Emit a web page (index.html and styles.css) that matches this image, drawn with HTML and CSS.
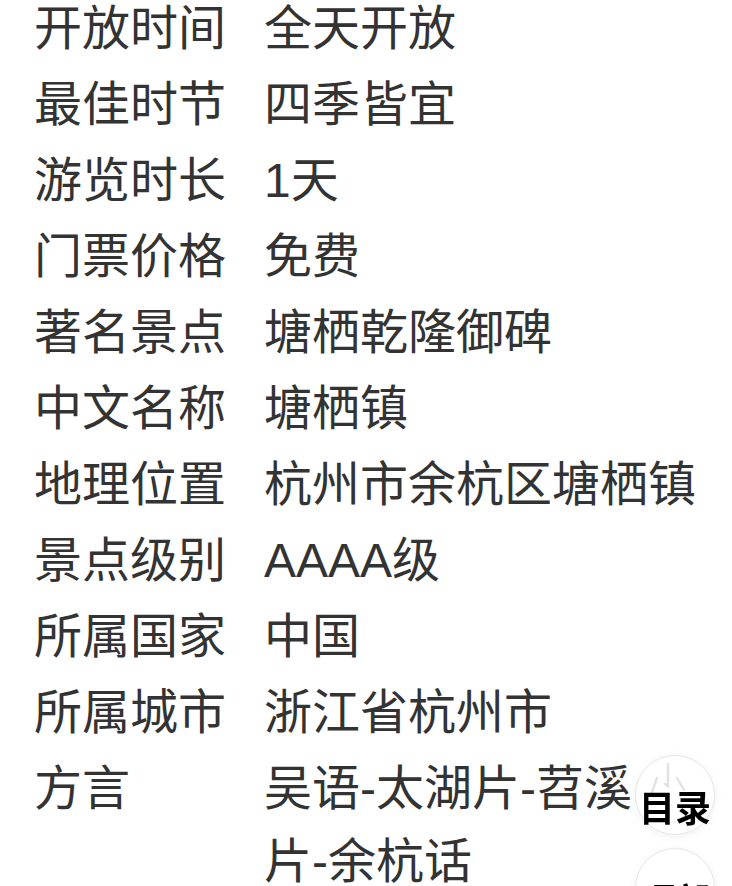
FILE: index.html
```html
<!DOCTYPE html>
<html lang="zh-CN">
<head>
<meta charset="utf-8">
<title>塘栖镇</title>
<link rel="stylesheet" href="styles.css">
</head>
<body>
<dl class="info">
  <div class="row"><dt>开放时间</dt><dd>全天开放</dd></div>
  <div class="row"><dt>最佳时节</dt><dd>四季皆宜</dd></div>
  <div class="row"><dt>游览时长</dt><dd>1天</dd></div>
  <div class="row"><dt>门票价格</dt><dd>免费</dd></div>
  <div class="row"><dt>著名景点</dt><dd>塘栖乾隆御碑</dd></div>
  <div class="row"><dt>中文名称</dt><dd>塘栖镇</dd></div>
  <div class="row"><dt>地理位置</dt><dd>杭州市余杭区塘栖镇</dd></div>
  <div class="row"><dt>景点级别</dt><dd>AAAA级</dd></div>
  <div class="row"><dt>所属国家</dt><dd>中国</dd></div>
  <div class="row"><dt>所属城市</dt><dd>浙江省杭州市</dd></div>
  <div class="row"><dt>方言</dt><dd>吴语-太湖片-苕溪<br>片-余杭话</dd></div>
</dl>
<div class="fab-stack">
  <button class="fab">
    <svg class="fab-icon" width="44" height="40" viewBox="0 0 44 40" aria-hidden="true">
      <path d="M24 6 V28 L21 26" fill="none" stroke="#e2e2e2" stroke-width="2.4" stroke-linecap="round"/>
      <path d="M13 20 L8 34" fill="none" stroke="#e2e2e2" stroke-width="2.4" stroke-linecap="round"/>
      <path d="M33 20 L40 32" fill="none" stroke="#e2e2e2" stroke-width="2.4" stroke-linecap="round"/>
    </svg>
    <span class="fab-label">目录</span>
  </button>
  <button class="fab">
    <span class="fab-label">顶部</span>
  </button>
</div>
</body>
</html>
```
FILE: styles.css
```css
html, body {
  margin: 0;
  padding: 0;
  background: #ffffff;
}
body {
  font-family: "Liberation Sans", "Noto Sans CJK SC", sans-serif;
  color: #333333;
  overflow: hidden;
}
.info {
  margin: -8px 0 0 0;
  padding: 0 0 0 34px;
  display: flex;
  flex-direction: column;
  gap: 3px;
}
.row {
  display: grid;
  grid-template-columns: 230px 1fr;
  font-size: 48px;
  line-height: 73px;
}
.row dt, .row dd {
  margin: 0;
}
.fab-stack {
  position: fixed;
  left: 635px;
  top: 755px;
  display: flex;
  flex-direction: column;
  gap: 13px;
}
.fab {
  position: relative;
  width: 80px;
  height: 80px;
  border-radius: 50%;
  background: #ffffff;
  border: 1px solid #e6e6e6;
  box-shadow: 0 2px 10px rgba(0, 0, 0, 0.06);
  padding: 0;
  display: flex;
  align-items: center;
  justify-content: center;
}
.fab-icon {
  position: absolute;
  left: 8px;
  top: 2px;
}
.fab-label {
  position: relative;
  font-family: "Noto Sans CJK SC", sans-serif;
  font-weight: 700;
  font-size: 36px;
  line-height: 1;
  color: #000000;
  margin-top: 22px;
  white-space: nowrap;
}
```
